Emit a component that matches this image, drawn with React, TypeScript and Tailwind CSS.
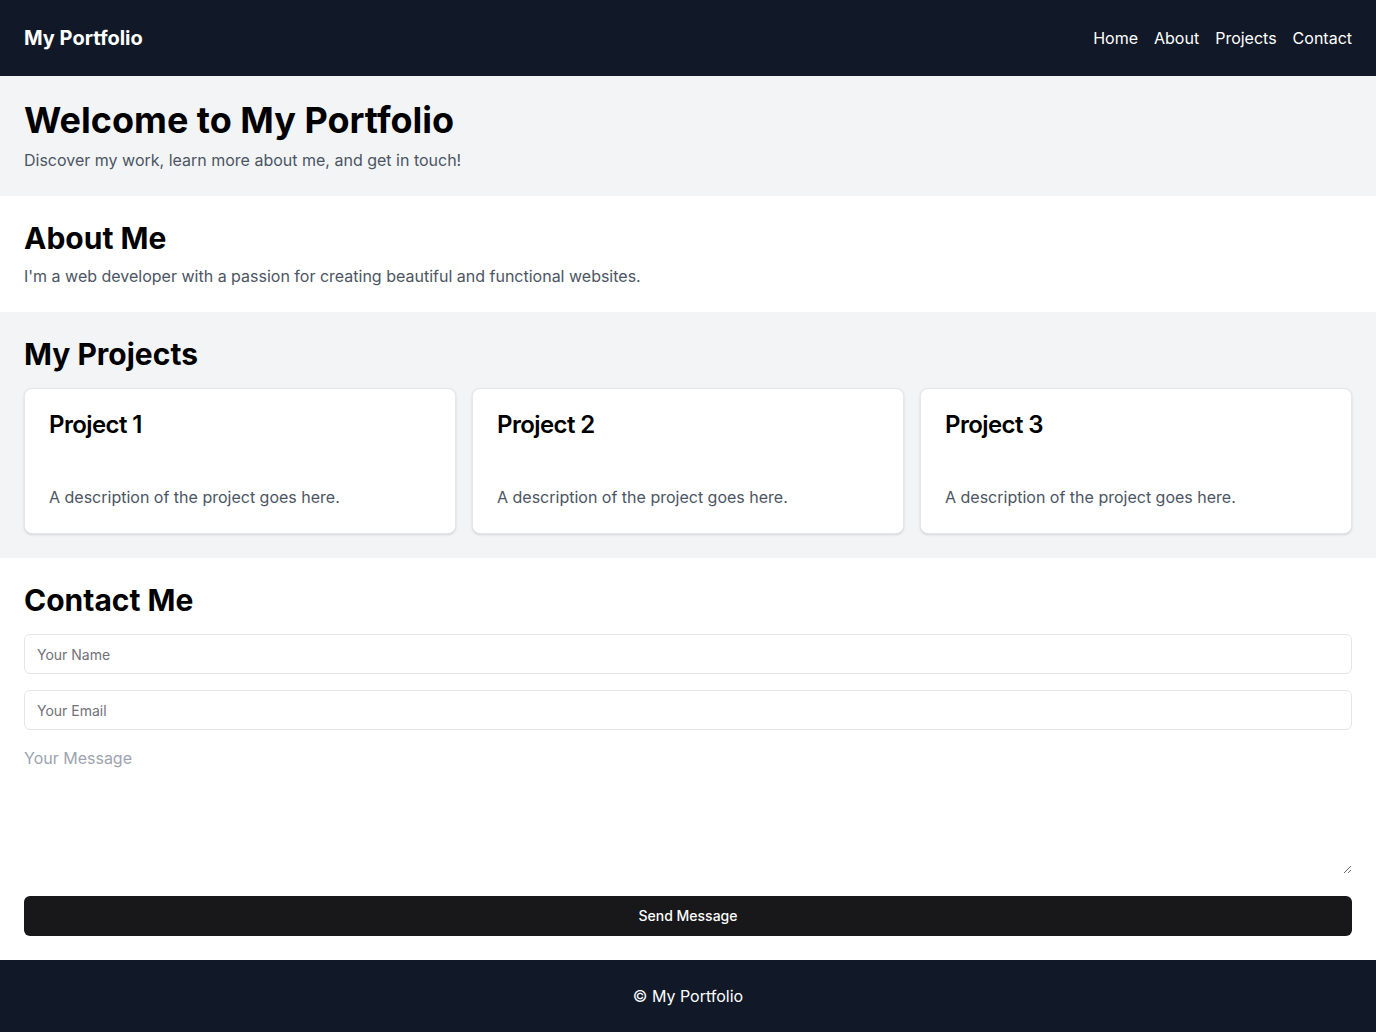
import React from "react";

export default function App() {
  const projects = ["Project 1", "Project 2", "Project 3"];
  return (
    <div className="min-h-screen bg-white text-black" style={{ fontFamily: "Inter, 'Noto Sans', sans-serif" }}>
      <header className="bg-[#111827] text-white px-6 py-6 flex items-center justify-between">
        <h1 className="text-xl font-bold leading-7">My Portfolio</h1>
        <nav className="flex gap-4 text-base">
          <a href="#">Home</a>
          <a href="#">About</a>
          <a href="#">Projects</a>
          <a href="#">Contact</a>
        </nav>
      </header>
      <section className="bg-[#f3f4f6] px-6 py-6">
        <h2 className="text-4xl font-bold leading-10 mb-2">Welcome to My Portfolio</h2>
        <p className="text-base text-[#4b5563]">Discover my work, learn more about me, and get in touch!</p>
      </section>
      <section className="bg-white px-6 py-6">
        <h2 className="text-3xl font-bold leading-9 mb-2">About Me</h2>
        <p className="text-base text-[#4b5563]">I'm a web developer with a passion for creating beautiful and functional websites.</p>
      </section>
      <section className="bg-[#f3f4f6] px-6 py-6">
        <h2 className="text-3xl font-bold leading-9 mb-4">My Projects</h2>
        <div className="grid grid-cols-3 gap-4">
          {projects.map((p) => (
            <div key={p} className="bg-white rounded-lg border border-[#e5e7eb] shadow-sm">
              <div className="p-6">
                <h3 className="text-2xl font-semibold leading-none tracking-tight">{p}</h3>
              </div>
              <div className="p-6">
                <p className="text-base text-[#4b5563]">A description of the project goes here.</p>
              </div>
            </div>
          ))}
        </div>
      </section>
      <section className="bg-white px-6 py-6">
        <h2 className="text-3xl font-bold leading-9 mb-4">Contact Me</h2>
        <form className="flex flex-col gap-4" onSubmit={(e) => e.preventDefault()}>
          <input
            placeholder="Your Name"
            className="h-10 w-full rounded-md border border-[#e4e4e7] bg-white px-3 py-2 text-sm placeholder:text-[#71717a] outline-none"
          />
          <input
            placeholder="Your Email"
            className="h-10 w-full rounded-md border border-[#e4e4e7] bg-white px-3 py-2 text-sm placeholder:text-[#71717a] outline-none"
          />
          <textarea
            placeholder="Your Message"
            className="w-full h-[128px] mb-[6px] text-base leading-6 placeholder:text-[#9ca3af] outline-none"
          />
          <button type="submit" className="h-10 w-full rounded-md bg-[#18181b] text-white text-sm font-medium">
            Send Message
          </button>
        </form>
      </section>
      <footer className="bg-[#111827] text-white py-6 text-center text-base">
        © My Portfolio
      </footer>
    </div>
  );
}
